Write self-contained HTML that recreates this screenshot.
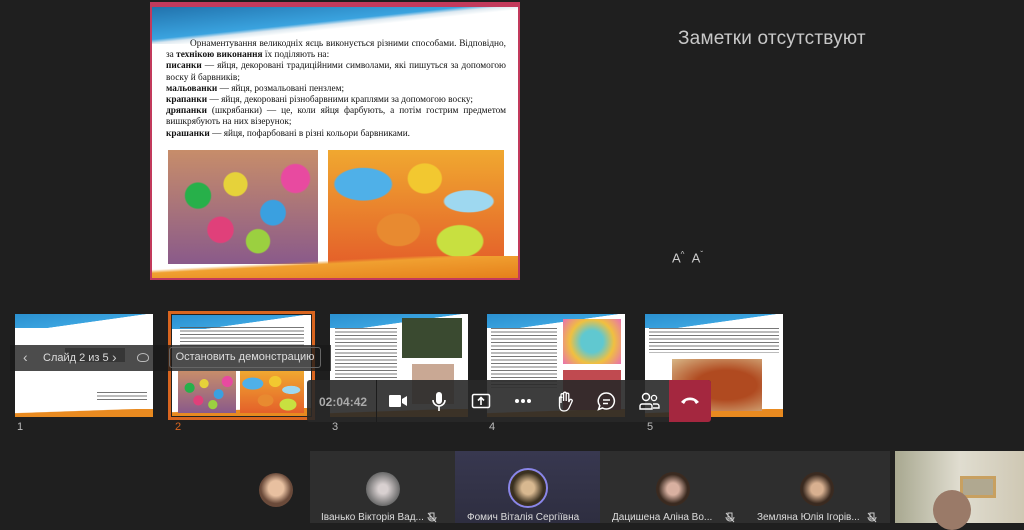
<!DOCTYPE html>
<html><head><meta charset="utf-8"><style>
*{margin:0;padding:0;box-sizing:border-box}
body{width:1024px;height:523px;background:#1f1f1f;position:relative;overflow:hidden;font-family:"Liberation Sans","DejaVu Sans",sans-serif}
.a{position:absolute}
.slide{left:150px;top:2px;width:370px;height:278px;border:2px solid #c23a5c;background:#fff;overflow:hidden}
.txt{font-family:"Liberation Serif",serif;font-size:9.3px;line-height:11.2px;color:#111;text-align:justify}
.wave{background:linear-gradient(174deg,#1f6ea8 0%,#3aa3df 45%,#dde8f0 50%,transparent 56%)}
.eggs1{background:radial-gradient(circle at 20% 40%,#27b04a 9%,transparent 10%),radial-gradient(circle at 45% 30%,#e6d23a 10%,transparent 11%),radial-gradient(circle at 70% 55%,#3aa0e0 10%,transparent 11%),radial-gradient(circle at 35% 70%,#e0407a 10%,transparent 11%),radial-gradient(circle at 85% 25%,#e84aa0 9%,transparent 10%),radial-gradient(circle at 60% 80%,#9bd040 9%,transparent 10%),linear-gradient(#c78d6a,#8a5a8a)}
.eggs2{background:radial-gradient(ellipse at 20% 30%,#4fb0e8 14%,transparent 15%),radial-gradient(ellipse at 55% 25%,#f2c830 12%,transparent 13%),radial-gradient(ellipse at 80% 45%,#9ed8f0 12%,transparent 13%),radial-gradient(ellipse at 40% 70%,#e88a30 14%,transparent 15%),radial-gradient(ellipse at 75% 80%,#c8e040 12%,transparent 13%),linear-gradient(#f0a830,#e4602a)}
.th{background:#fff;overflow:hidden}
.th .w{position:absolute;left:0;top:0;width:100%;height:14px;background:linear-gradient(172deg,#2a90d0 0%,#3aa3df 55%,transparent 56%)}
.th .o{position:absolute;left:0;bottom:0;width:100%;height:8px;background:linear-gradient(178deg,transparent 30%,#e88a20 35%)}
.lines{position:absolute;background:repeating-linear-gradient(#555 0 1px,transparent 1px 3.5px);opacity:.8}
.num{color:#bbb;font-size:11px;top:421px}
.tile{top:451px;height:72px}
.av{border-radius:50%;position:absolute}
.nm{position:absolute;top:512px;font-size:10px;color:#ddd;white-space:nowrap}
.ic{position:absolute;top:391px}
.mic{position:absolute;top:512px}
</style></head><body>

<div class="a slide">
  <div class="a wave" style="left:0;top:0;width:370px;height:40px"></div>
  <div class="a" style="left:0;top:0;width:368px;height:3px;background:#c23a5c"></div>
  <div class="a txt" style="left:14px;top:35px;width:340px">
  <span style="padding-left:24px">Орнаментування великодніх яєць виконується різними способами. Відповідно,</span> за <b>технікою виконання</b> їх поділяють на:<br>
  <b>писанки</b> — яйця, декоровані традиційними символами, які пишуться за допомогою воску й барвників;<br>
  <b>мальованки</b> — яйця, розмальовані пензлем;<br>
  <b>крапанки</b> — яйця, декоровані різнобарвними краплями за допомогою воску;<br>
  <b>дряпанки</b> (шкрябанки) — це, коли яйця фарбують, а потім гострим предметом вишкрябують на них візерунок;<br>
  <b>крашанки</b> — яйця, пофарбовані в різні кольори барвниками.
  </div>
  <div class="a eggs1" style="left:16px;top:146px;width:150px;height:114px"></div>
  <div class="a eggs2" style="left:176px;top:146px;width:176px;height:114px"></div>
  <div class="a" style="left:0;top:252px;width:370px;height:26px;background:linear-gradient(177deg,transparent 30%,#f0a030 38%,#e47a18 100%)"></div>
</div>

<div class="a" style="left:678px;top:28px;font-size:19px;color:#c8c8c8;letter-spacing:.2px">Заметки отсутствуют</div>
<div class="a" style="left:672px;top:250px;font-size:13px;color:#ccc">A<sup style="font-size:8px">^</sup>&nbsp;&nbsp;A<sup style="font-size:8px">ˇ</sup></div>

<!-- thumbnails -->
<div class="a th" style="left:15px;top:314px;width:138px;height:103px"><div class="w"></div><div class="o"></div>
 <div class="a" style="left:50px;top:34px;width:60px;height:14px;background:#555;opacity:.6"></div>
 <div class="lines" style="left:82px;top:78px;width:50px;height:10px"></div></div>
<div class="a" style="left:168px;top:311px;width:147px;height:109px;border:3px solid #d9651f;background:#222"></div>
<div class="a th" style="left:172px;top:315px;width:139px;height:101px"><div class="w"></div><div class="o"></div>
 <div class="lines" style="left:8px;top:12px;width:124px;height:20px"></div>
 <div class="a eggs1" style="left:6px;top:56px;width:58px;height:42px"></div>
 <div class="a eggs2" style="left:68px;top:56px;width:64px;height:42px"></div></div>
<div class="a th" style="left:330px;top:314px;width:138px;height:103px"><div class="w"></div><div class="o"></div>
 <div class="lines" style="left:5px;top:14px;width:62px;height:50px"></div>
 <div class="a" style="left:72px;top:4px;width:60px;height:40px;background:#3a4a30"></div>
 <div class="a" style="left:82px;top:50px;width:42px;height:40px;background:#c9a894"></div></div>
<div class="a th" style="left:487px;top:314px;width:138px;height:103px"><div class="w"></div><div class="o"></div>
 <div class="lines" style="left:4px;top:14px;width:66px;height:60px"></div>
 <div class="a" style="left:76px;top:5px;width:58px;height:45px;background:radial-gradient(circle,#60c8d0 30%,#f0c040 60%,#e870b0)"></div>
 <div class="a" style="left:76px;top:56px;width:58px;height:40px;background:#c04a50"></div></div>
<div class="a th" style="left:645px;top:314px;width:138px;height:103px"><div class="w"></div><div class="o"></div>
 <div class="lines" style="left:4px;top:14px;width:130px;height:25px"></div>
 <div class="a" style="left:27px;top:45px;width:90px;height:52px;background:radial-gradient(ellipse at 60% 50%,#b04a20 40%,#d8b888)"></div></div>
<div class="a num" style="left:17px">1</div>
<div class="a num" style="left:175px;color:#d9651f">2</div>
<div class="a num" style="left:332px">3</div>
<div class="a num" style="left:489px">4</div>
<div class="a num" style="left:647px">5</div>

<!-- slide nav -->
<div class="a" style="left:10px;top:345px;width:321px;height:26px;background:rgba(25,25,25,.78)"></div>
<div class="a" style="left:23px;top:349px;color:#ccc;font-size:14px">‹</div>
<div class="a" style="left:43px;top:352px;color:#ddd;font-size:11px">Слайд 2 из 5</div>
<div class="a" style="left:112px;top:349px;color:#ccc;font-size:14px">›</div>
<div class="a" style="left:137px;top:353px;width:12px;height:9px;border:1.5px solid #bbb;border-radius:50% 50% 40% 40%"></div>
<div class="a" style="left:169px;top:347px;width:152px;height:21px;border:1px solid #666;border-radius:3px;color:#ddd;font-size:11px;line-height:19px;text-align:center">Остановить демонстрацию</div>

<!-- call bar -->
<div class="a" style="left:307px;top:380px;width:404px;height:42px;background:rgba(40,40,40,.9);border-radius:3px"></div>
<div class="a" style="left:376px;top:380px;width:1px;height:42px;background:#1c1c1c"></div>
<div class="a" style="left:319px;top:395px;color:#aaa;font-size:12px;font-weight:bold">02:04:42</div>
<svg class="ic" style="left:388px" width="20" height="20" viewBox="0 0 20 20"><rect x="1" y="4" width="12" height="12" rx="1" fill="#fff"/><path d="M14 8l5-3v10l-5-3z" fill="#fff"/></svg>
<svg class="ic" style="left:430px" width="18" height="22" viewBox="0 0 18 22"><rect x="6" y="1" width="6" height="12" rx="3" fill="#fff"/><path d="M3 9a6 6 0 0012 0M9 15v5" stroke="#fff" stroke-width="1.6" fill="none"/></svg>
<svg class="ic" style="left:471px" width="20" height="20" viewBox="0 0 20 20"><rect x="1.5" y="3.5" width="17" height="13" rx="1.5" stroke="#fff" stroke-width="1.5" fill="none"/><path d="M10 14V7M7 9.5l3-3 3 3" stroke="#fff" stroke-width="1.6" fill="none"/></svg>
<svg class="ic" style="left:513px" width="20" height="20" viewBox="0 0 20 20"><circle cx="4" cy="10" r="2" fill="#fff"/><circle cx="10" cy="10" r="2" fill="#fff"/><circle cx="16" cy="10" r="2" fill="#fff"/></svg>
<svg class="ic" style="left:555px" width="20" height="22" viewBox="0 0 20 22"><path d="M6 12V4a1.3 1.3 0 012.6 0v6V2.5a1.3 1.3 0 012.6 0V10V3.5a1.3 1.3 0 012.6 0V11l1-2a1.3 1.3 0 012.3 1.2L14 17c-1 2-2.5 3-5 3-3 0-4.5-2-4.5-5V7a1.2 1.2 0 012.4 0" stroke="#fff" stroke-width="1.3" fill="none"/></svg>
<svg class="ic" style="left:596px" width="21" height="21" viewBox="0 0 21 21"><path d="M10.5 2a8 8 0 11-4 15L2.5 18.5l1.3-3.8A8 8 0 0110.5 2z" stroke="#fff" stroke-width="1.5" fill="none"/><path d="M7 9h7M7 12.5h5" stroke="#fff" stroke-width="1.4"/></svg>
<svg class="ic" style="left:638px" width="22" height="21" viewBox="0 0 22 21"><circle cx="8" cy="6" r="3.5" stroke="#fff" stroke-width="1.4" fill="none"/><circle cx="16" cy="7" r="2.6" stroke="#fff" stroke-width="1.3" fill="none"/><path d="M2 18v-3a2 2 0 012-2h8a2 2 0 012 2v3zM15 13h4a2 2 0 012 2v2h-6" stroke="#fff" stroke-width="1.4" fill="none"/></svg>
<div class="a" style="left:669px;top:380px;width:42px;height:42px;background:#a4273f;border-radius:0 3px 3px 0"></div>
<svg class="a" style="left:680px;top:394px" width="20" height="12" viewBox="0 0 20 12"><path d="M1 8c5-6 13-6 18 0l-3 2-2-3c-2-1-6-1-8 0l-2 3z" fill="#fff"/></svg>

<!-- participants -->
<div class="a tile" style="left:310px;width:145px;background:#2e2e2e"></div>
<div class="a tile" style="left:455px;width:145px;background:linear-gradient(#383850,#2e2e40)"></div>
<div class="a tile" style="left:600px;width:145px;background:#2e2e2e"></div>
<div class="a tile" style="left:745px;width:145px;background:#2e2e2e"></div>
<div class="a tile" style="left:895px;width:129px;background:linear-gradient(90deg,#a8a890,#e0ddd0 50%,#cfc8b4)"></div>
<div class="a" style="left:960px;top:476px;width:36px;height:22px;border:3px solid #c8a060;background:#b0a890"></div>
<div class="a av" style="left:933px;top:490px;width:38px;height:40px;background:#9a7a68"></div>
<div class="a av" style="left:259px;top:473px;width:34px;height:34px;background:radial-gradient(circle at 50% 45%,#e8c0a0 30%,#6a4a3a 60%)"></div>
<div class="a av" style="left:366px;top:472px;width:34px;height:34px;background:radial-gradient(circle,#d8d0d0 20%,#6a6a6a 70%)"></div>
<div class="a av" style="left:508px;top:468px;width:40px;height:40px;border:2px solid #8a86e8;background:radial-gradient(circle,#d8b890 25%,#3a3020 60%)"></div>
<div class="a av" style="left:656px;top:472px;width:34px;height:34px;background:radial-gradient(circle,#d8b0a0 25%,#3a2a20 60%)"></div>
<div class="a av" style="left:800px;top:472px;width:34px;height:34px;background:radial-gradient(circle,#d8b090 25%,#3a2a20 60%)"></div>
<div class="nm" style="left:321px">Іванько Вікторія Вад...</div>
<div class="nm" style="left:467px">Фомич Віталія Сергіївна</div>
<div class="nm" style="left:612px">Дацишена Аліна Во...</div>
<div class="nm" style="left:757px">Земляна Юлія Ігорів...</div>
<svg class="mic" style="left:427px" width="10" height="11" viewBox="0 0 10 11"><path d="M3 1h4v6H3zM1 5a4 4 0 008 0M1 1l8 9" stroke="#ccc" stroke-width="1" fill="none"/></svg>
<svg class="mic" style="left:725px" width="10" height="11" viewBox="0 0 10 11"><path d="M3 1h4v6H3zM1 5a4 4 0 008 0M1 1l8 9" stroke="#ccc" stroke-width="1" fill="none"/></svg>
<svg class="mic" style="left:867px" width="10" height="11" viewBox="0 0 10 11"><path d="M3 1h4v6H3zM1 5a4 4 0 008 0M1 1l8 9" stroke="#ccc" stroke-width="1" fill="none"/></svg>
</body></html>
